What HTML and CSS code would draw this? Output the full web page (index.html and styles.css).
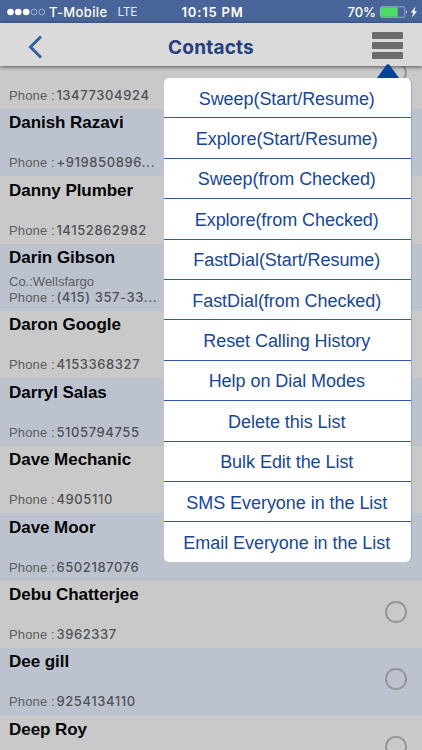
FILE: index.html
```html
<!DOCTYPE html>
<html lang="en">
<head>
<meta charset="utf-8">
<title>Contacts</title>
<link rel="stylesheet" href="styles.css">
</head>
<body>
<div class="screen">
  <div class="status">
    <div class="carrier">
      <svg class="signal" width="39" height="8" viewBox="0 0 39 8"><g fill="#fff"><circle cx="3.5" cy="4" r="3.3"/><circle cx="11.3" cy="4" r="3.3"/><circle cx="19.2" cy="4" r="3.3"/></g><g fill="none" stroke="#b4c1da" stroke-width=".8"><circle cx="27" cy="4" r="2.9"/><circle cx="34.8" cy="4" r="2.9"/></g></svg>
      <span class="provider">T-Mobile</span><span class="network">LTE</span>
    </div>
    <span class="time">10:15 PM</span>
    <div class="power">
      <span>70%</span>
      <svg width="38" height="14" viewBox="0 0 38 14"><rect x=".5" y="1.8" width="24.3" height="10.5" rx="1.5" fill="none" stroke="#a5b8d2" stroke-width=".9"/><path d="M1 2.3h16.7v9.5H1z" fill="#4cdb64"/><path d="M26 5q1.700 2 0 4z" fill="#dce5f2"/><path d="M35.500 1.500l-4.700 6.100h2.500L32 12.600l5-6.300h-2.600z" fill="#fff"/></svg>
    </div>
  </div>
  <header class="header">
    <svg class="back" width="16" height="24" viewBox="0 0 16 24"><path d="M14 1.500L3.500 12l10.500 10.500" fill="none" stroke="#34609f" stroke-width="3"/></svg>
    <h1>Contacts</h1>
    <div class="burger"><i></i><i></i><i></i></div>
  </header>
  <main class="list">
    <div class="contact"><div class="name"></div><div class="company"></div><div class="phone">Phone :<b>13477304924</b></div><span class="radio"></span></div>
    <div class="contact"><div class="name">Danish Razavi</div><div class="company"></div><div class="phone">Phone :<b>+919850896...</b></div><span class="radio"></span></div>
    <div class="contact"><div class="name">Danny Plumber</div><div class="company"></div><div class="phone">Phone :<b>14152862982</b></div><span class="radio"></span></div>
    <div class="contact"><div class="name">Darin Gibson</div><div class="company">Co.:Wellsfargo</div><div class="phone">Phone :<b>(415) 357-33...</b></div><span class="radio"></span></div>
    <div class="contact"><div class="name">Daron Google</div><div class="company"></div><div class="phone">Phone :<b>4153368327</b></div><span class="radio"></span></div>
    <div class="contact"><div class="name">Darryl Salas</div><div class="company"></div><div class="phone">Phone :<b>5105794755</b></div><span class="radio"></span></div>
    <div class="contact"><div class="name">Dave Mechanic</div><div class="company"></div><div class="phone">Phone :<b>4905110</b></div><span class="radio"></span></div>
    <div class="contact"><div class="name">Dave Moor</div><div class="company"></div><div class="phone">Phone :<b>6502187076</b></div><span class="radio"></span></div>
    <div class="contact"><div class="name">Debu Chatterjee</div><div class="company"></div><div class="phone">Phone :<b>3962337</b></div><span class="radio"></span></div>
    <div class="contact"><div class="name">Dee gill</div><div class="company"></div><div class="phone">Phone :<b>9254134110</b></div><span class="radio"></span></div>
    <div class="contact"><div class="name">Deep Roy</div><span class="radio"></span></div>
  </main>
  <svg class="pointer" width="22" height="14" viewBox="0 0 22 14"><path d="M0 14L9 1.500Q11-1 13 1.500L22 14z" fill="#07429a"/></svg>
  <nav class="menu">
    <div>Sweep(Start/Resume)</div>
    <div>Explore(Start/Resume)</div>
    <div>Sweep(from Checked)</div>
    <div>Explore(from Checked)</div>
    <div>FastDial(Start/Resume)</div>
    <div>FastDial(from Checked)</div>
    <div>Reset Calling History</div>
    <div>Help on Dial Modes</div>
    <div>Delete this List</div>
    <div>Bulk Edit the List</div>
    <div>SMS Everyone in the List</div>
    <div>Email Everyone in the List</div>
  </nav>
</div>
</body>
</html>
```
FILE: styles.css
```css
* { box-sizing: border-box; }
body { margin: 0; font-family: "Liberation Sans", Arial, sans-serif; }
.screen { position: relative; width: 422px; height: 750px; overflow: hidden; background: #c9c9c9; display: flex; flex-direction: column; }

.status { flex: none; height: 23px; background: #486498; color: #fff; display: grid; grid-template-columns: 1fr auto 1fr; align-items: center; padding: 1px 4px 0 7px; font: 600 13px/20px Inter, sans-serif; }
.carrier { display: flex; align-items: center; }
.signal { margin-right: 3px; }
.provider { font-weight: 500; letter-spacing: .35px; }
.network { font-weight: 400; font-size: 12px; margin-left: 10px; letter-spacing: -.3px; color: #e3e9f3; }
.time { letter-spacing: .8px; }
.power { display: flex; align-items: center; justify-content: flex-end; gap: 4px; font-weight: 500; font-size: 13px; }

.header { flex: none; position: relative; z-index: 1; height: 43px; background: #dadada; box-shadow: 0 1px 4px rgba(0,0,0,.6); display: grid; grid-template-columns: 1fr auto 1fr; align-items: center; padding: 5px 19px 0 27px; }
.header h1 { margin: 2px 8px 0 0; font: 700 19px/24px Inter, sans-serif; letter-spacing: .2px; color: #253f7c; }
.burger { justify-self: end; display: grid; gap: 3px; padding-bottom: 3px; }
.burger i { width: 31px; height: 7px; border-radius: 1px; background: #6c6c6c; }

.list { margin-top: -24.600px; }
.contact { position: relative; height: 67.400px; padding: 4.400px 9px 0; background: #c9c9c9; }
.contact:nth-child(even) { background: #bcc3cf; }
.name { height: 26px; font-weight: 700; font-size: 17px; line-height: 20px; letter-spacing: -.05px; color: #050506; }
.company { height: 15px; font-size: 13px; line-height: 15px; color: #5c5d60; }
.phone { font-size: 13px; line-height: 16px; letter-spacing: .15px; color: #5c5d60; white-space: nowrap; }
.phone b { margin-left: 1.500px; font: 500 13px/16px Inter, sans-serif; letter-spacing: .6px; color: #505155; }
.radio { position: absolute; right: 15.500px; top: 20.500px; width: 21.500px; height: 21.500px; border: 2px solid #969696; border-radius: 50%; }

.pointer { position: absolute; z-index: 2; left: 377px; top: 64px; }
.menu { position: absolute; z-index: 3; left: 163.500px; top: 78px; width: 247.500px; height: 484px; background: #fff; border-radius: 5px; box-shadow: .5px 0 0 #668abd; display: grid; grid-template-rows: repeat(12, 40.400px); overflow: hidden; }
.menu div { display: flex; align-items: center; justify-content: center; padding: 3px 1px 0 0; border-bottom: 1px solid #2f5ba8; font-size: 18px; letter-spacing: -.05px; color: #174796; white-space: nowrap; }
.menu div:last-child { border-bottom: 0; }
```
